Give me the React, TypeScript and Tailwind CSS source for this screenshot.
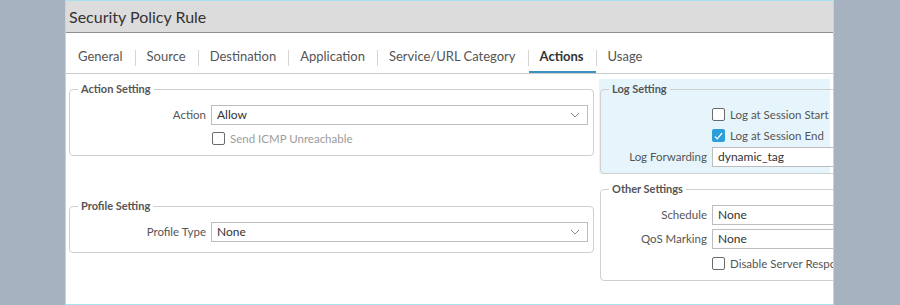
import React from "react";

const font = { fontFamily: "Lato, 'Open Sans', sans-serif" };

const tabs = [
  "General",
  "Source",
  "Destination",
  "Application",
  "Service/URL Category",
  "Actions",
  "Usage",
];

function Chevron() {
  return (
    <svg width="10" height="6" viewBox="0 0 10 6" className="shrink-0">
      <polyline points="1,1 5,5 9,1" fill="none" stroke="#8a8a8a" strokeWidth="1" />
    </svg>
  );
}

function Select({ value, chevron = true }: { value: string; chevron?: boolean }) {
  return (
    <div className="flex h-[20px] flex-1 items-center justify-between border border-[#bdbdbd] bg-white pl-[5px] pr-[7px] text-[12px] text-[#333]">
      <span>{value}</span>
      {chevron && <Chevron />}
    </div>
  );
}

function Checkbox({ checked, label, muted }: { checked?: boolean; label: string; muted?: boolean }) {
  return (
    <div className="flex h-[13px] items-center gap-[5px]">
      {checked ? (
        <span className="flex h-[13px] w-[13px] items-center justify-center rounded-[2px] bg-[#2b9fd9]">
          <svg width="9" height="8" viewBox="0 0 9 8">
            <polyline points="1,4.5 3.3,6.8 8,1" fill="none" stroke="#fff" strokeWidth="1.2" />
          </svg>
        </span>
      ) : (
        <span className="h-[13px] w-[13px] rounded-[2px] border border-[#6b6b6b] bg-white" />
      )}
      <span className={`whitespace-nowrap text-[11.5px] ${muted ? "text-[#9c9c9c]" : "text-[#555]"}`}>
        {label}
      </span>
    </div>
  );
}

function Row({ label, labelWidth, children }: { label?: string; labelWidth: string; children: React.ReactNode }) {
  return (
    <div className="flex items-center">
      <div className={`${labelWidth} shrink-0 whitespace-nowrap pr-[5px] text-right text-[11.5px] text-[#555]`}>
        {label}
      </div>
      {children}
    </div>
  );
}

function Group({ title, className, children }: { title: string; className?: string; children: React.ReactNode }) {
  return (
    <fieldset className={`rounded-[4px] border border-[#cfcfcf] ${className ?? ""}`}>
      <legend className="ml-[3px] px-[3px] text-[11px] font-bold leading-[14px] text-[#555]">{title}</legend>
      {children}
    </fieldset>
  );
}

export default function App() {
  return (
    <div className="flex h-[305px] w-[900px] bg-[#a6b2c0] pl-[65px]" style={font}>
      <div className="flex h-[305px] w-[769px] flex-col overflow-hidden border border-[#a9e0f0] bg-white">
        {/* title bar */}
        <div className="flex h-[32px] shrink-0 items-center border-b border-[#8e8e8e] bg-[#dcdcdd] px-[3px] text-[16px] text-[#333]">
          Security Policy Rule
        </div>

        {/* tabs */}
        <div className="flex h-[41px] shrink-0 items-end border-b border-[#cccccc] pl-[1px]">
          {tabs.map((t, i) => (
            <div key={t} className="flex h-full items-end">
              {i > 0 && <div className="mb-[7px] h-[16px] w-px bg-[#d4d4d4]" />}
              <div
                className={`flex h-full items-start pl-[11px] pr-[12px] pt-[15px] text-[13px] leading-[16px] ${
                  t === "Actions" ? "border-b-2 border-[#3a91c2] font-bold text-[#333]" : "text-[#555]"
                }`}
              >
                {t}
              </div>
            </div>
          ))}
        </div>

        {/* body */}
        <div className="flex flex-1 gap-[5px] pl-[3px]">
          <div className="w-[525px] shrink-0">
            <Group title="Action Setting" className="mt-[8px] px-[5px] pb-[10px] pt-[9px]">
              <div className="flex flex-col gap-[7px]">
                <Row label="Action" labelWidth="w-[136px]">
                  <Select value="Allow" />
                </Row>
                <Row labelWidth="w-[137px]">
                  <Checkbox label="Send ICMP Unreachable" muted />
                </Row>
              </div>
            </Group>
            <Group title="Profile Setting" className="mt-[43px] px-[5px] pb-[10px] pt-[9px]">
              <Row label="Profile Type" labelWidth="w-[136px]">
                <Select value="None" />
              </Row>
            </Group>
          </div>

          <div className="w-[300px] shrink-0">
            <div className="mt-[5px] w-[231px] bg-[#e6f5fc] pl-[1px] pt-[3px]">
              <Group title="Log Setting" className="w-[290px] pb-[6px] pl-[5px] pt-[12px]">
                <div className="flex flex-col">
                  <Row labelWidth="w-[106px]">
                    <Checkbox label="Log at Session Start" />
                  </Row>
                  <div className="h-[8px]" />
                  <Row labelWidth="w-[106px]">
                    <Checkbox checked label="Log at Session End" />
                  </Row>
                  <div className="h-[5px]" />
                  <Row label="Log Forwarding" labelWidth="w-[106px]">
                    <Select value="dynamic_tag" />
                  </Row>
                </div>
              </Group>
            </div>
            <Group title="Other Settings" className="ml-[1px] mt-[8px] w-[290px] pb-[10px] pl-[5px] pt-[9px]">
              <div className="flex flex-col">
                <Row label="Schedule" labelWidth="w-[106px]">
                  <Select value="None" />
                </Row>
                <div className="h-[4px]" />
                <Row label="QoS Marking" labelWidth="w-[106px]">
                  <Select value="None" />
                </Row>
                <div className="h-[8px]" />
                <Row labelWidth="w-[106px]">
                  <Checkbox label="Disable Server Response Inspection" />
                </Row>
              </div>
            </Group>
          </div>
        </div>
      </div>
    </div>
  );
}
